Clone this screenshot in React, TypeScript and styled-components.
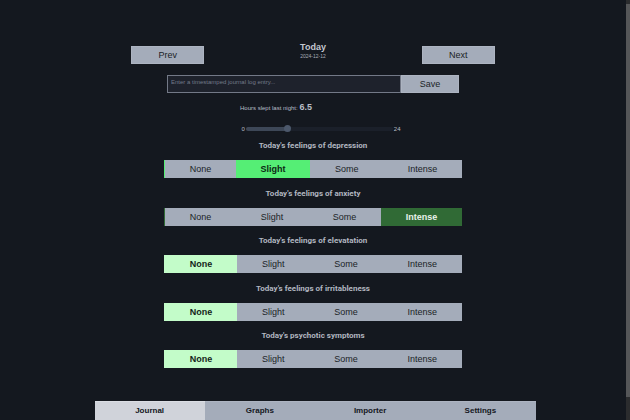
import { useState } from 'react';
import styled, { createGlobalStyle } from 'styled-components';

const GlobalStyle = createGlobalStyle`
  * { box-sizing: border-box; }
  html {
    background: #14181f;
    overflow: hidden;
  }
  body {
    margin: 0;
    color: #b9bec7;
    font-family: "Liberation Sans", Arial, sans-serif;
    font-size: 8px;
  }
  button, input { font: inherit; border-radius: 0; }
`;

const Shell = styled.div`
  display: flex;
  height: 100vh;
`;

const Page = styled.main`
  flex: 1;
  min-width: 0;
  display: flex;
  flex-direction: column;
  align-items: center;
  padding-top: 42px;
`;

const ScrollTrack = styled.div`
  width: 4px;
  padding: 4px 0 23px;
  background: #2b2c2e;
  display: flex;
`;

const ScrollThumb = styled.div`
  flex: 1;
  background: #555658;
`;

const Header = styled.header`
  width: 58%;
  display: flex;
  justify-content: space-between;
  align-items: flex-start;
`;

const Button = styled.button`
  height: 18px;
  padding: 0;
  border: 1px solid #adb4c1;
  background: #a4acba;
  color: #1b1f27;
  font-size: 9px;
  line-height: 16px;
`;

const NavButton = styled(Button)`
  width: 20%;
  margin-top: 4px;
`;

const DateBlock = styled.div`
  text-align: center;
`;

const Title = styled.h1`
  margin: 0;
  font-size: 9px;
  line-height: 11px;
  color: #c3c7cf;
`;

const DateText = styled.time`
  display: block;
  font-size: 5px;
  line-height: 7px;
  color: #a9aeb8;
`;

const EntryForm = styled.form`
  width: 292px;
  max-width: 100%;
  margin-top: 11px;
  display: flex;
`;

const EntryInput = styled.input`
  flex: 1;
  min-width: 0;
  height: 18px;
  padding: 0 3px 4px;
  border: 1px solid #737987;
  background: #1e222c;
  color: #b9bec7;
  font-size: 6px;
  outline: none;
  &::placeholder { color: #747b8a; opacity: 1; }
`;

const SaveButton = styled(Button)`
  width: 58px;
`;

const SleepLabel = styled.label`
  width: 146px;
  margin-top: 8px;
  font-size: 6px;
  line-height: 12px;
`;

const SleepValue = styled.strong`
  font-size: 9px;
`;

const SliderRow = styled.div`
  margin-top: 8px;
  padding-left: 16px;
  display: flex;
  align-items: center;
  gap: 1px;
  height: 14px;
  font-size: 6px;
  line-height: 14px;
`;

const Slider = styled.input<{ $fill: number }>`
  appearance: none;
  width: 147px;
  height: 8px;
  margin: 0;
  background: transparent;
  &::-webkit-slider-runnable-track {
    height: 4px;
    border-radius: 2px;
    background: linear-gradient(to right, #3d4757 ${p => p.$fill}%, #1b202a ${p => p.$fill}%);
  }
  &::-webkit-slider-thumb {
    appearance: none;
    width: 7px;
    height: 7px;
    margin-top: -2px;
    border-radius: 50%;
    background: #4c586b;
  }
`;

const MoodList = styled.div`
  width: 298px;
  max-width: 100%;
  min-height: 228px;
  margin-top: 4px;
  display: flex;
  flex-direction: column;
  justify-content: space-between;
`;

const Mood = styled.section`
  display: flex;
  flex-direction: column;
  gap: 9px;
`;

const MoodTitle = styled.h2`
  margin: 0;
  text-align: center;
  font-family: Roboto, sans-serif;
  font-size: 8px;
  font-weight: 700;
  line-height: 11px;
  color: #b1b6c0;
`;

const Segments = styled.div<{ $edge: string }>`
  display: flex;
  border-left: 1px solid ${p => p.$edge};
`;

const Segment = styled.button<{ $fill?: string; $ink?: string }>`
  flex: 1 1 auto;
  height: 18px;
  padding: 0;
  border: 0;
  background: ${p => p.$fill ?? '#a4acba'};
  color: ${p => p.$ink ?? '#1b1f27'};
  font-size: 9px;
  font-weight: ${p => (p.$fill ? 700 : 400)};
  line-height: 18px;
`;

const TabBar = styled.nav`
  position: fixed;
  bottom: 0;
  left: 15%;
  width: 70%;
  display: grid;
  grid-template-columns: repeat(4, 1fr);
`;

const Tab = styled.button<{ $active: boolean }>`
  height: 19px;
  padding: 0;
  border: 0;
  border-top: 1px solid ${p => (p.$active ? '#dadde3' : '#adb4c1')};
  background: ${p => (p.$active ? '#d0d3da' : '#a4acba')};
  color: #14171d;
  font-weight: 700;
  line-height: 18px;
`;

const levels = [
  { name: 'None', fill: '#c3fcc9', ink: '#14251a' },
  { name: 'Slight', fill: '#55ee75', ink: '#0c2914' },
  { name: 'Some', fill: '#3fb556', ink: '#0c2914' },
  { name: 'Intense', fill: '#306a35', ink: '#e9f2ea' },
];

const initialMoods = [
  { title: "Today's feelings of depression", level: 1 },
  { title: "Today's feelings of anxiety", level: 3 },
  { title: "Today's feelings of elevatation", level: 0 },
  { title: "Today's feelings of irritableness", level: 0 },
  { title: "Today's psychotic symptoms", level: 0 },
];

const tabs = ['Journal', 'Graphs', 'Importer', 'Settings'];

export default function App() {
  const [moods, setMoods] = useState(initialMoods);
  const [hours, setHours] = useState(6.5);
  const [tab, setTab] = useState('Journal');

  const choose = (index: number, level: number) =>
    setMoods(moods.map((m, i) => (i === index ? { ...m, level } : m)));

  return (
    <>
      <GlobalStyle />
      <Shell>
        <Page>
          <Header>
            <NavButton type="button">Prev</NavButton>
            <DateBlock>
              <Title>Today</Title>
              <DateText dateTime="2024-12-12">2024-12-12</DateText>
            </DateBlock>
            <NavButton type="button">Next</NavButton>
          </Header>
          <EntryForm onSubmit={e => e.preventDefault()}>
            <EntryInput
              aria-label="Journal log entry"
              placeholder="Enter a timestamped journal log entry..."
            />
            <SaveButton type="submit">Save</SaveButton>
          </EntryForm>
          <SleepLabel htmlFor="sleep">
            Hours slept last night: <SleepValue>{hours}</SleepValue>
          </SleepLabel>
          <SliderRow>
            <span>0</span>
            <Slider
              id="sleep"
              type="range"
              min={0}
              max={24}
              step={0.5}
              value={hours}
              $fill={(hours / 24) * 100}
              onChange={e => setHours(Number(e.target.value))}
            />
            <span>24</span>
          </SliderRow>
          <MoodList>
            {moods.map((mood, i) => (
              <Mood key={mood.title}>
                <MoodTitle>{mood.title}</MoodTitle>
                <Segments role="group" aria-label={mood.title} $edge={levels[mood.level].fill}>
                  {levels.map((level, j) => (
                    <Segment
                      key={level.name}
                      type="button"
                      aria-pressed={mood.level === j}
                      $fill={mood.level === j ? level.fill : undefined}
                      $ink={mood.level === j ? level.ink : undefined}
                      onClick={() => choose(i, j)}
                    >
                      {level.name}
                    </Segment>
                  ))}
                </Segments>
              </Mood>
            ))}
          </MoodList>
        </Page>
        <ScrollTrack>
          <ScrollThumb />
        </ScrollTrack>
      </Shell>
      <TabBar>
        {tabs.map(name => (
          <Tab key={name} type="button" $active={tab === name} onClick={() => setTab(name)}>
            {name}
          </Tab>
        ))}
      </TabBar>
    </>
  );
}
